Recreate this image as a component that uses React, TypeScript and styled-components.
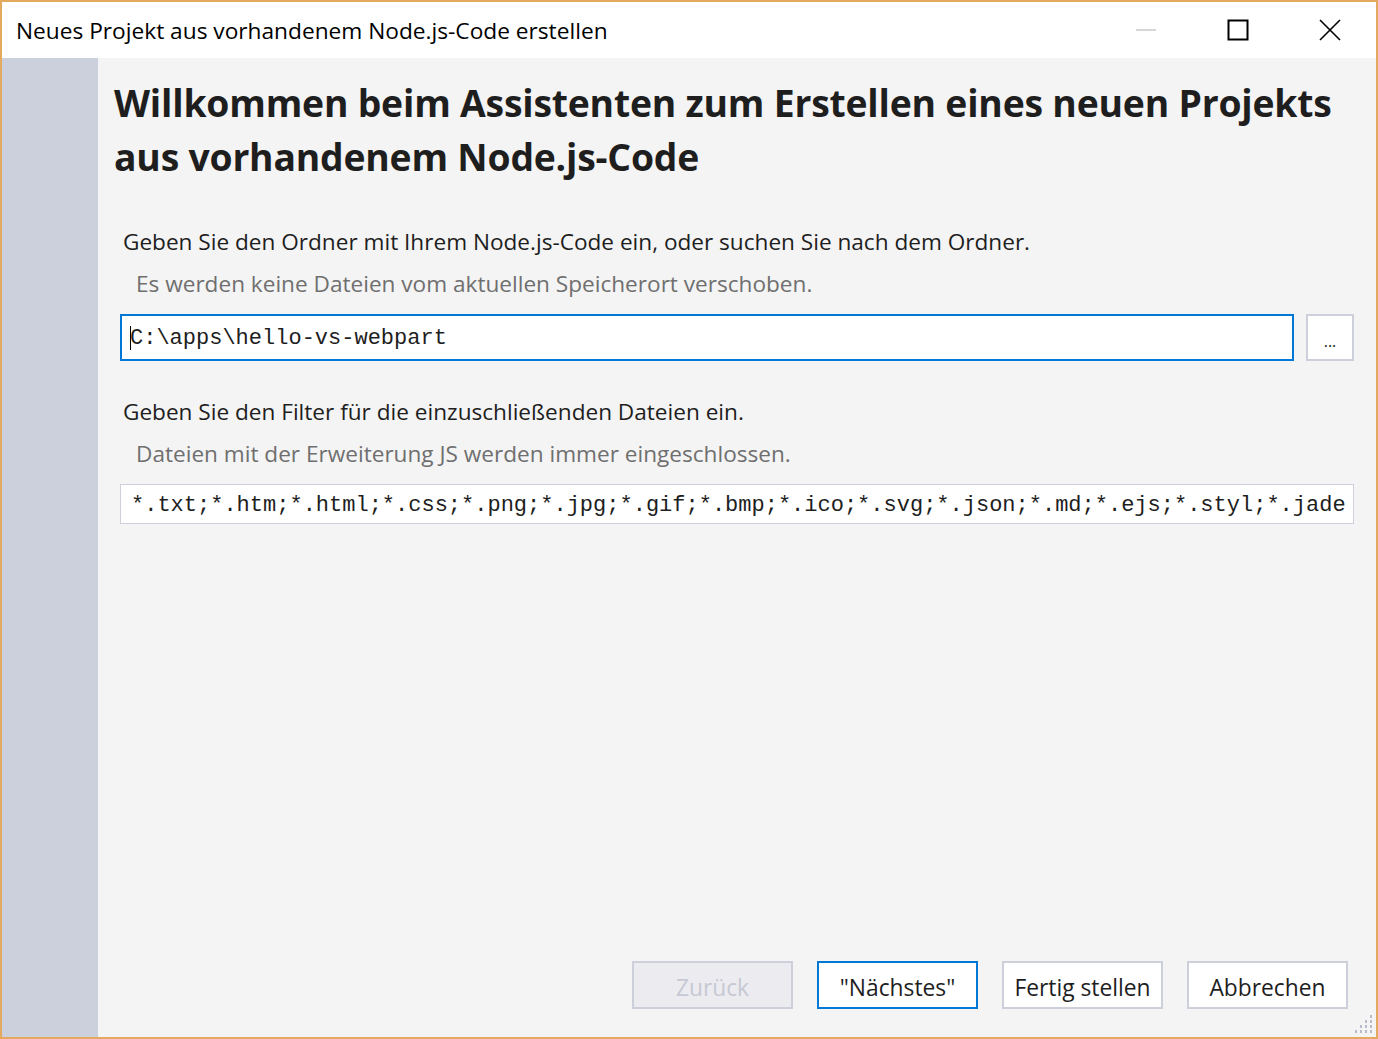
import React from "react";
import styled, { createGlobalStyle } from "styled-components";

const Global = createGlobalStyle`
  html, body { margin: 0; padding: 0; background: #ffffff; }
  * { box-sizing: border-box; }
`;

const UI_FONT = `"Open Sans", "Noto Sans", "Liberation Sans", sans-serif`;
const MONO_FONT = `"Liberation Mono", "DejaVu Sans Mono", monospace`;

const Window = styled.div`
  position: relative;
  width: 1378px;
  height: 1039px;
  border: 2px solid #e3a95e;
  display: flex;
  flex-direction: column;
  font-family: ${UI_FONT};
  color: #1e1e1e;
  overflow: hidden;
`;

const TitleBar = styled.div`
  height: 56px;
  flex: none;
  background: #ffffff;
  display: flex;
  align-items: center;
  padding-left: 14px;
`;

const TitleText = styled.div`
  flex: 1;
  font-size: 22.7px;
  color: #000000;
  white-space: nowrap;
  padding-top: 1px;
`;

const Controls = styled.div`
  display: flex;
  align-self: stretch;
`;

const ControlButton = styled.div`
  width: 92px;
  display: flex;
  align-items: center;
  justify-content: center;
`;

const Body = styled.div`
  flex: 1;
  display: flex;
  min-height: 0;
`;

const Sidebar = styled.div`
  width: 96px;
  flex: none;
  background: #cccfdc;
`;

const Main = styled.div`
  flex: 1;
  min-width: 0;
  background: #f4f4f4;
  display: flex;
  flex-direction: column;
  padding: 18px 22px 28px 16px;
`;

const Heading = styled.h1`
  margin: 0;
  font-size: 37.3px;
  line-height: 54px;
  font-weight: 700;
  color: #1e1e1e;
  letter-spacing: -0.2px;
  white-space: nowrap;
`;

const Section = styled.div<{ $top: number }>`
  margin-top: ${(p) => p.$top}px;
  display: flex;
  flex-direction: column;
`;

const Label = styled.div`
  font-size: 22.6px;
  line-height: 30px;
  padding-left: 9px;
  color: #1e1e1e;
  white-space: nowrap;
`;

const Hint = styled.div`
  font-size: 22.6px;
  line-height: 30px;
  padding-left: 22px;
  margin-top: 12px;
  color: #6f6f6f;
  white-space: nowrap;
`;

const FieldRow = styled.div`
  margin-top: 15px;
  display: flex;
  gap: 12px;
  padding-left: 6px;
`;

const TextField = styled.div<{ $focused?: boolean; $h: number }>`
  flex: 1;
  min-width: 0;
  height: ${(p) => p.$h}px;
  background: #ffffff;
  border: ${(p) => (p.$focused ? "2px solid #0078d7" : "1px solid #cdd0da")};
  padding-left: ${(p) => (p.$focused ? 8 : 10)}px;
  padding-right: 4px;
  padding-top: 3px;
  display: flex;
  align-items: center;
`;

const FieldText = styled.div`
  flex: 1;
  min-width: 0;
  overflow: hidden;
  font-family: ${MONO_FONT};
  font-size: 22px;
  line-height: 28px;
  color: #1e1e1e;
  white-space: nowrap;
`;

const Caret = styled.span`
  display: inline-block;
  width: 1px;
  height: 24px;
  background: #000;
  margin-right: -1px;
  vertical-align: middle;
`;

const BrowseButton = styled.div`
  width: 48px;
  flex: none;
  height: 47px;
  background: #ffffff;
  border: 2px solid #cdd0da;
  display: flex;
  align-items: flex-end;
  justify-content: center;
  padding-bottom: 10px;
  font-size: 16px;
  line-height: 16px;
  color: #1e1e1e;
`;

const Footer = styled.div`
  margin-top: auto;
  display: flex;
  justify-content: flex-end;
  gap: 24px;
  padding-right: 6px;
`;

const DialogButton = styled.div<{ $variant?: "disabled" | "default" | "normal" }>`
  width: 161px;
  height: 48px;
  flex: none;
  display: flex;
  align-items: center;
  justify-content: center;
  font-size: 22.8px;
  padding-top: 4px;
  background: ${(p) => (p.$variant === "disabled" ? "#ececf0" : "#ffffff")};
  color: ${(p) => (p.$variant === "disabled" ? "#c6c8d3" : "#1e1e1e")};
  border: 2px solid
    ${(p) => (p.$variant === "default" ? "#0078d7" : "#cdd0da")};
  white-space: nowrap;
`;

const Grip = styled.svg`
  position: absolute;
  right: 2px;
  bottom: 2px;
`;

const gripDots = [
  [16, 0],
  [11, 5],
  [16, 5],
  [6, 10],
  [11, 10],
  [16, 10],
  [1, 15],
  [6, 15],
  [11, 15],
  [16, 15],
];

export default function App() {
  return (
    <>
      <Global />
      <Window>
        <TitleBar>
          <TitleText>Neues Projekt aus vorhandenem Node.js-Code erstellen</TitleText>
          <Controls>
            <ControlButton>
              <svg width="22" height="4" viewBox="0 0 22 4">
                <line x1="1" y1="2" x2="21" y2="2" stroke="#c8c8c8" strokeWidth="1.5" />
              </svg>
            </ControlButton>
            <ControlButton>
              <svg width="22" height="22" viewBox="0 0 22 22">
                <rect x="1.5" y="1.5" width="19" height="19" fill="none" stroke="#000" strokeWidth="2" />
              </svg>
            </ControlButton>
            <ControlButton>
              <svg width="22" height="22" viewBox="0 0 22 22">
                <path d="M1 1 L21 21 M21 1 L1 21" stroke="#000" strokeWidth="1.6" fill="none" />
              </svg>
            </ControlButton>
          </Controls>
        </TitleBar>
        <Body>
          <Sidebar />
          <Main>
            <Heading>
              Willkommen beim Assistenten zum Erstellen eines neuen Projekts
              <br />
              aus vorhandenem Node.js-Code
            </Heading>
            <Section $top={43}>
              <Label>Geben Sie den Ordner mit Ihrem Node.js-Code ein, oder suchen Sie nach dem Ordner.</Label>
              <Hint>Es werden keine Dateien vom aktuellen Speicherort verschoben.</Hint>
              <FieldRow>
                <TextField $focused $h={47}>
                  <FieldText>
                    <Caret />
                    C:\apps\hello-vs-webpart
                  </FieldText>
                </TextField>
                <BrowseButton>...</BrowseButton>
              </FieldRow>
            </Section>
            <Section $top={36}>
              <Label>Geben Sie den Filter für die einzuschließenden Dateien ein.</Label>
              <Hint>Dateien mit der Erweiterung JS werden immer eingeschlossen.</Hint>
              <FieldRow>
                <TextField $h={40}>
                  <FieldText>
                    *.txt;*.htm;*.html;*.css;*.png;*.jpg;*.gif;*.bmp;*.ico;*.svg;*.json;*.md;*.ejs;*.styl;*.jade;*.xml;*.ts;*.tsx
                  </FieldText>
                </TextField>
              </FieldRow>
            </Section>
            <Footer>
              <DialogButton $variant="disabled">Zurück</DialogButton>
              <DialogButton $variant="default">"Nächstes"</DialogButton>
              <DialogButton>Fertig stellen</DialogButton>
              <DialogButton>Abbrechen</DialogButton>
            </Footer>
          </Main>
          <Grip width="20" height="20" viewBox="0 0 20 20">
            {gripDots.map(([x, y], i) => (
              <rect key={i} x={x} y={y} width="2" height="3" fill="#b9bcc8" />
            ))}
          </Grip>
        </Body>
      </Window>
    </>
  );
}
